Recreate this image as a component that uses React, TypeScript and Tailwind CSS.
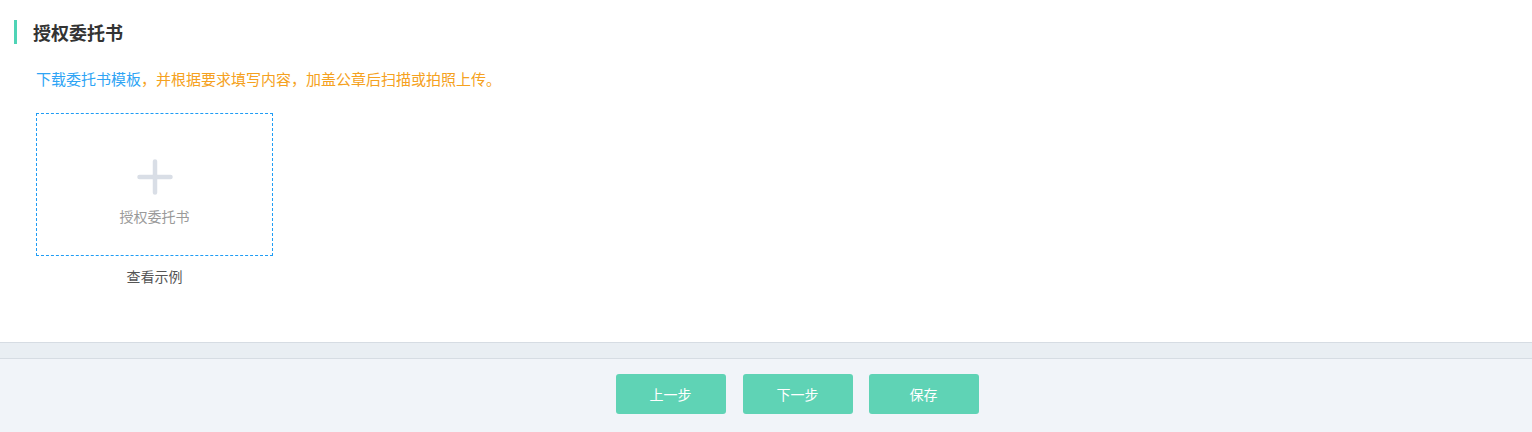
import React from "react";

const font = { fontFamily: '"Microsoft YaHei", "Noto Sans CJK SC", "Noto Sans", sans-serif' };

export default function App() {
  return (
    <div className="w-[1532px] h-[432px] flex flex-col bg-white overflow-hidden" style={font}>
      <div className="h-[342px] bg-white flex flex-col">
        <div className="flex items-center h-[24px] mt-[20px] ml-[14px]">
          <div className="w-[3px] h-[24px] bg-[#4fd4b6]" />
          <div className="ml-[16px] text-[18px] font-bold text-[#333] leading-[24px]">授权委托书</div>
        </div>
        <div className="mt-[24px] ml-[36px] text-[15px] leading-[22px]">
          <span className="text-[#2ea4f5]">下载委托书模板</span>
          <span className="text-[#f5a120]">，并根据要求填写内容，加盖公章后扫描或拍照上传。</span>
        </div>
        <div className="ml-[36px] mt-[23px] flex flex-col items-center w-[237px]">
          <div className="w-[237px] h-[143px] border border-dashed border-[#1f9cf4] flex flex-col items-center">
            <svg width="36" height="36" viewBox="0 0 36 36" className="mt-[45px]">
              <path d="M18 2.5v31M2.5 18h31" stroke="#d9dee6" strokeWidth="4.5" strokeLinecap="round" />
            </svg>
            <div className="mt-[11px] text-[14px] leading-[20px] text-[#9a9a9a]">授权委托书</div>
          </div>
          <div className="mt-[10px] text-[14px] leading-[20px] text-[#555]">查看示例</div>
        </div>
      </div>
      <div className="h-[17px] bg-[#e9eef3] border-t border-b border-[#d6dce3]" />
      <div className="flex-1 bg-[#f1f4f9] flex justify-center pt-[15px] pl-[62px] gap-[16px]">
        <button className="w-[110px] h-[40px] mr-[1px] rounded-[3px] bg-[#5fd3b5] text-white text-[14px]">上一步</button>
        <button className="w-[110px] h-[40px] rounded-[3px] bg-[#5fd3b5] text-white text-[14px]">下一步</button>
        <button className="w-[110px] h-[40px] rounded-[3px] bg-[#5fd3b5] text-white text-[14px]">保存</button>
      </div>
    </div>
  );
}
